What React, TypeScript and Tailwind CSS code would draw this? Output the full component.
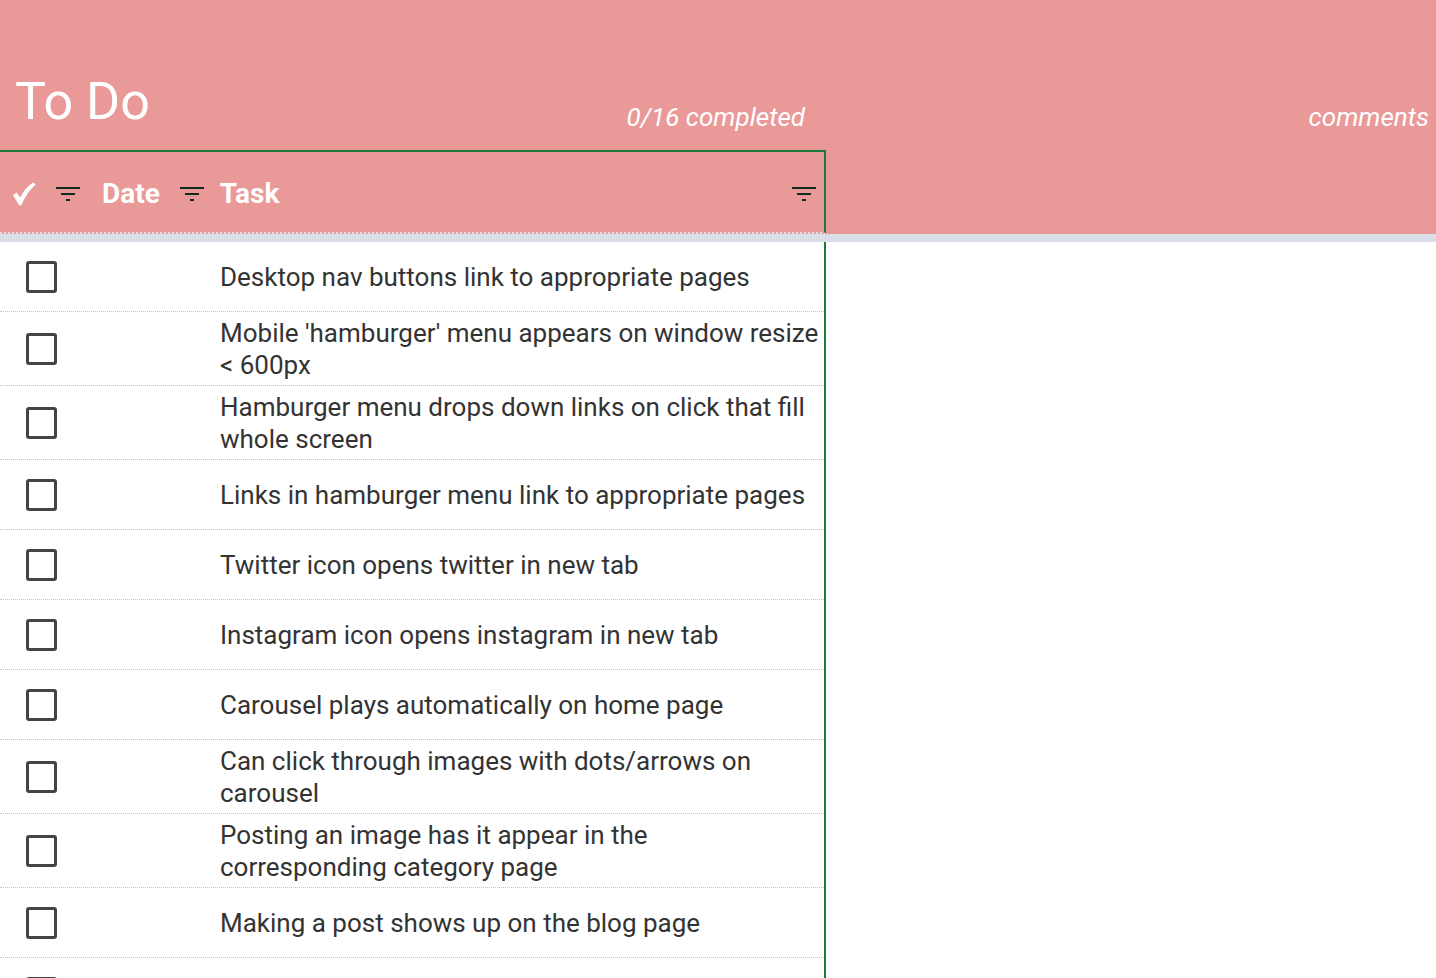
import React from "react";

const PINK = "bg-[#ea9999]";

const tasks = [
	"Desktop nav buttons link to appropriate pages",
	"Mobile 'hamburger' menu appears on window resize < 600px",
	"Hamburger menu drops down links on click that fill whole screen",
	"Links in hamburger menu link to appropriate pages",
	"Twitter icon opens twitter in new tab",
	"Instagram icon opens instagram in new tab",
	"Carousel plays automatically on home page",
	"Can click through images with dots/arrows on carousel",
	"Posting an image has it appear in the corresponding category page",
	"Making a post shows up on the blog page",
	"Clicking a blog post opens the full post",
	"Comments can be added to a blog post",
	"Contact form sends an email on submit",
	"Footer links open in new tab",
	"Site loads without errors in the console",
	"Images are lazy loaded on category pages",
];

const FilterIcon = () => (
	<svg width="24" height="14" viewBox="0 0 24 14" className="shrink-0">
		<rect x="0" y="0" width="24" height="2" fill="#10291a" />
		<rect x="5" y="6" width="14" height="2" fill="#10291a" />
		<rect x="10" y="12" width="4" height="2" fill="#10291a" />
	</svg>
);

const CheckMark = () => (
	<svg width="24" height="24" viewBox="0 0 24 24" className="shrink-0">
		<path
			d="M1 13.2 L4.6 10.6 L8.2 15.6 C11.2 9.2 15.4 4.2 21.2 0.6 L23.6 2.6 C17.4 8.2 12.8 15 9.4 23.2 L7.2 23.2 Z"
			fill="#ffffff"
		/>
	</svg>
);

const Row = ({ text }: { text: string }) => (
	<div className="flex items-center min-h-[70px] pt-[5px] pb-[4px] border-b border-dotted border-[#c4c4c4]">
		<div className="ml-[26px] w-[31px] h-[32px] shrink-0 border-[3px] border-[#444444] rounded-[3px]" />
		<div className="ml-[163px] w-[599px] text-[26px] leading-[32px] text-[#333333]">
			{text}
		</div>
	</div>
);

export default function App() {
	return (
		<div
			className="w-full min-h-screen bg-white"
			style={{ fontFamily: "Roboto, 'Liberation Sans', sans-serif" }}
		>
			{/* title bar */}
			<div className={`flex h-[150px] ${PINK}`}>
				<div className="w-[826px] flex items-end justify-between">
					<div className="pl-[15px] pb-[22px] text-[52px] leading-none text-white">
						To Do
					</div>
					<div className="pr-[21px] pb-[20px] text-[26px] leading-none italic text-white">
						0/16 completed
					</div>
				</div>
				<div className="flex-1 flex items-end justify-end">
					<div className="pr-[7px] pb-[20px] text-[26px] leading-none italic text-white">
						comments
					</div>
				</div>
			</div>

			{/* column headers */}
			<div className={`flex h-[84px] ${PINK}`}>
				<div className="w-[826px] flex items-center border-t-2 border-r-2 border-b-2 border-t-[#1f7a3a] border-r-[#1f7a3a] border-b-[#dadee6] border-dotted [border-top-style:solid] [border-right-style:solid]">
					<div className="ml-[12px] mt-[4px]">
						<CheckMark />
					</div>
					<div className="ml-[20px] mt-[4px]">
						<FilterIcon />
					</div>
					<div className="ml-[22px] mt-[4px] text-[28px] leading-none font-bold text-white">
						Date
					</div>
					<div className="ml-[20px] mt-[4px]">
						<FilterIcon />
					</div>
					<div className="ml-[16px] mt-[4px] text-[28px] leading-none font-bold text-white">
						Task
					</div>
					<div className="ml-auto mr-[8px] mt-[4px]">
						<FilterIcon />
					</div>
				</div>
				<div className="flex-1" />
			</div>

			{/* frozen divider */}
			<div className="h-[8px] bg-[#dadee6]" />

			{/* rows */}
			<div className="flex">
				<div className="w-[826px] border-r-2 border-[#1f7a3a]">
					{tasks.map((t) => (
						<Row key={t} text={t} />
					))}
				</div>
				<div className="flex-1" />
			</div>
		</div>
	);
}
